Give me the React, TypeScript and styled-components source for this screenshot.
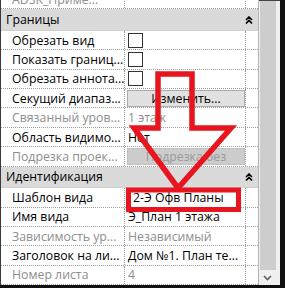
import React from "react";
import styled, { createGlobalStyle } from "styled-components";

const Global = createGlobalStyle`
  html, body {
    margin: 0;
    padding: 0;
    background: #ffffff;
  }
`;

const Frame = styled.div`
  width: 285px;
  height: 288px;
  background: #111111;
  display: flex;
  align-items: flex-start;
`;

const Panel = styled.div`
  position: relative;
  width: 279px;
  height: 285px;
  background: #ffffff;
  border-left: 1px solid #3a3a3a;
  display: flex;
  overflow: hidden;
  font-family: "Open Sans", "Noto Sans", sans-serif;
  font-size: 12.3px;
  font-weight: 500;
  color: #000000;
`;

const Grid = styled.div`
  width: 257px;
  display: flex;
  flex-direction: column;
  border-right: 1px solid #b4b4b4;
`;

const Row = styled.div<{ $first?: boolean }>`
  height: 19.4px;
  flex: none;
  box-sizing: border-box;
  display: flex;
  border-bottom: 1px dotted #9c9c9c;
  margin-top: ${(p) => (p.$first ? "-10px" : "0")};
`;

const Label = styled.div<{ $muted?: boolean }>`
  width: 124px;
  flex: none;
  box-sizing: border-box;
  padding-left: 11px;
  border-right: 1px dotted #9c9c9c;
  display: flex;
  align-items: center;
  white-space: nowrap;
  overflow: hidden;
  color: ${(p) => (p.$muted ? "#8e8e8e" : "#000000")};
`;

const Value = styled.div<{ $muted?: boolean }>`
  width: 121px;
  flex: none;
  box-sizing: border-box;
  padding-left: 3px;
  border-right: 1px dotted #9c9c9c;
  display: flex;
  align-items: center;
  white-space: nowrap;
  overflow: hidden;
  color: ${(p) => (p.$muted ? "#8e8e8e" : "#000000")};
`;

const Spare = styled.div`
  flex: 1;
`;

const Header = styled.div`
  height: 21.5px;
  flex: none;
  box-sizing: border-box;
  background: #dadada;
  display: flex;
  align-items: center;
  padding-left: 5px;
  border-bottom: 1px solid #d0d0d0;
`;

const HeaderTitle = styled.div`
  flex: 1;
`;

const Collapse = styled.div`
  width: 10px;
  margin-right: 4px;
  display: flex;
  align-items: center;
  justify-content: center;
`;

const Check = styled.div`
  width: 13px;
  height: 13px;
  border: 1px solid #333333;
  background: #ffffff;
`;

const Btn = styled.div<{ $disabled?: boolean }>`
  width: 118px;
  height: 17px;
  box-sizing: border-box;
  margin-left: -1px;
  background: ${(p) => (p.$disabled ? "#cccccc" : "#e1e1e1")};
  border: 1px solid ${(p) => (p.$disabled ? "#bfbfbf" : "#adadad")};
  color: ${(p) => (p.$disabled ? "#9a9a9a" : "#000000")};
  display: flex;
  align-items: center;
  justify-content: center;
`;

const Dropdown = styled.div`
  padding-left: 5px;
`;

const Scroll = styled.div`
  width: 21px;
  flex: none;
  background: #f0f0f0;
  border-top: 1px solid #444444;
  display: flex;
  flex-direction: column;
`;

const Thumb = styled.div`
  width: 16px;
  height: 269px;
  background: #cdcdcd;
  margin-left: 1px;
`;

const ArrowBtn = styled.div`
  flex: 1;
  width: 17px;
  display: flex;
  align-items: center;
  justify-content: center;
`;

const Overlay = styled.svg`
  position: absolute;
  left: -1px;
  top: 0;
  pointer-events: none;
`;

const CollapseIcon = () => (
  <svg width="8" height="8" viewBox="0 0 8 8">
    <path d="M1 4 L4 1 L7 4 M1 7.5 L4 4.5 L7 7.5" fill="none" stroke="#000" strokeWidth="1.6" />
  </svg>
);

type Item = {
  label: string;
  value?: React.ReactNode;
  mutedLabel?: boolean;
  mutedValue?: boolean;
};

const bounds: Item[] = [
  { label: "Обрезать вид", value: <Check /> },
  { label: "Показать границ...", value: <Check /> },
  { label: "Обрезать аннота...", value: <Check /> },
  { label: "Секущий диапаз...", value: <Btn>Изменить...</Btn> },
  { label: "Связанный уров...", value: "1 этаж", mutedLabel: true, mutedValue: true },
  { label: "Область видимо...", value: "Нет" },
  { label: "Подрезка проек...", value: <Btn $disabled>Подрезка без</Btn>, mutedLabel: true },
];

const ident: Item[] = [
  { label: "Шаблон вида", value: <Dropdown>2-Э  Офв Планы</Dropdown> },
  { label: "Имя вида", value: "Э_План 1 этажа" },
  { label: "Зависимость ур...", value: "Независимый", mutedLabel: true, mutedValue: true },
  { label: "Заголовок на ли...", value: "Дом №1. План те..." },
  { label: "Номер листа", value: "4", mutedLabel: true, mutedValue: true },
];

const renderRow = (it: Item) => (
  <Row key={it.label}>
    <Label $muted={it.mutedLabel}>{it.label}</Label>
    <Value $muted={it.mutedValue}>{it.value}</Value>
    <Spare />
  </Row>
);

export default function App() {
  return (
    <>
      <Global />
      <Frame>
        <Panel>
          <Grid>
            <Row $first>
              <Label $muted>ADSK_Приме...</Label>
              <Value />
              <Spare />
            </Row>
            <Header>
              <HeaderTitle>Границы</HeaderTitle>
              <Collapse>
                <CollapseIcon />
              </Collapse>
            </Header>
            {bounds.map(renderRow)}
            <Header>
              <HeaderTitle>Идентификация</HeaderTitle>
              <Collapse>
                <CollapseIcon />
              </Collapse>
            </Header>
            {ident.map(renderRow)}
          </Grid>
          <Scroll>
            <Thumb />
            <ArrowBtn>
              <svg width="9" height="6" viewBox="0 0 9 6">
                <path d="M1 1 L4.5 4.5 L8 1" fill="none" stroke="#606060" strokeWidth="1.6" />
              </svg>
            </ArrowBtn>
          </Scroll>
          <Overlay width="280" height="285" viewBox="0 0 280 285">
            <polygon
              points="158,74 192,74 192,128 231,128 178,188 134,128 158,128"
              fill="none"
              stroke="#e8141e"
              strokeWidth="5.5"
              strokeLinejoin="miter"
            />
            <rect x="128.5" y="190" width="110" height="19.5" fill="none" stroke="#e8141e" strokeWidth="5" />
          </Overlay>
        </Panel>
      </Frame>
    </>
  );
}
